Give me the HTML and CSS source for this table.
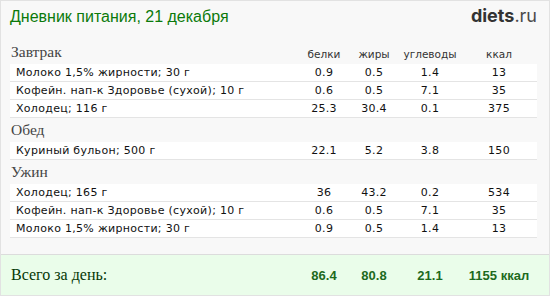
FILE: index.html
```html
<!DOCTYPE html>
<html lang="ru">
<head>
<meta charset="utf-8">
<title>Дневник питания</title>
<link rel="stylesheet" href="styles.css">
</head>
<body>
<div class="page">
  <div class="header">
    <div class="title">Дневник питания, 21 декабря</div>
    <div class="logo"><b>diets</b>.ru</div>
  </div>
  <div class="content">
    <div class="section-head">
      <div class="meal">Завтрак</div>
      <div class="col">белки</div>
      <div class="col">жиры</div>
      <div class="col">углеводы</div>
      <div class="col">ккал</div>
    </div>
    <div class="row"><div class="name">Молоко 1,5% жирности; 30 г</div><div class="col">0.9</div><div class="col">0.5</div><div class="col">1.4</div><div class="col">13</div></div>
    <div class="row"><div class="name">Кофейн. нап-к Здоровье (сухой); 10 г</div><div class="col">0.6</div><div class="col">0.5</div><div class="col">7.1</div><div class="col">35</div></div>
    <div class="row"><div class="name">Холодец; 116 г</div><div class="col">25.3</div><div class="col">30.4</div><div class="col">0.1</div><div class="col">375</div></div>

    <div class="section-head"><div class="meal">Обед</div></div>
    <div class="row"><div class="name">Куриный бульон; 500 г</div><div class="col">22.1</div><div class="col">5.2</div><div class="col">3.8</div><div class="col">150</div></div>

    <div class="section-head"><div class="meal">Ужин</div></div>
    <div class="row"><div class="name">Холодец; 165 г</div><div class="col">36</div><div class="col">43.2</div><div class="col">0.2</div><div class="col">534</div></div>
    <div class="row"><div class="name">Кофейн. нап-к Здоровье (сухой); 10 г</div><div class="col">0.6</div><div class="col">0.5</div><div class="col">7.1</div><div class="col">35</div></div>
    <div class="row"><div class="name">Молоко 1,5% жирности; 30 г</div><div class="col">0.9</div><div class="col">0.5</div><div class="col">1.4</div><div class="col">13</div></div>
  </div>
  <div class="total">
    <div class="total-label">Всего за день:</div>
    <div class="col">86.4</div>
    <div class="col">80.8</div>
    <div class="col">21.1</div>
    <div class="col">1155 ккал</div>
  </div>
</div>
</body>
</html>
```
FILE: styles.css
```css
* { box-sizing: border-box; }
html, body { margin: 0; padding: 0; background: #f8f8f8; }
.page {
  width: 550px;
  height: 296px;
  border: 1px solid #e2e2e2;
  background: #f8f8f8;
  display: flex;
  flex-direction: column;
}
.header {
  height: 39px;
  display: flex;
  justify-content: space-between;
  align-items: flex-start;
  padding: 7px 12px 0 9px;
}
.title {
  font-family: "Liberation Sans", Arial, sans-serif;
  font-size: 16px;
  color: #0b7a0b;
  line-height: 18px;
}
.logo {
  font-family: "Inter", "Open Sans", sans-serif;
  font-size: 18px;
  color: #4a4a4a;
  line-height: 18px;
  margin-top: -1px;
}
.logo b { color: #333; font-weight: 700; }
.content {
  padding: 0 12px 0 9px;
  flex: 1;
}
.section-head, .row, .total {
  display: grid;
  grid-template-columns: 1fr 50px 50px 62px 76px;
  align-items: end;
}
.section-head {
  height: 24px;
  padding-bottom: 4px;
}
.meal {
  font-family: "Liberation Serif", "Times New Roman", serif;
  font-size: 15.5px;
  color: #444;
  line-height: 16px;
  padding-left: 1px;
}
.section-head .col {
  font-family: "DejaVu Sans", Verdana, sans-serif;
  font-size: 10.5px;
  color: #333;
  text-align: center;
  line-height: 12px;
}
.row {
  height: 18px;
  background: #fff;
  border-bottom: 1px solid #e4e4e4;
  align-items: center;
  font-family: "DejaVu Sans", Verdana, sans-serif;
  font-size: 11px;
  letter-spacing: 0.3px;
  color: #111;
}
.row .name { padding-left: 6px; white-space: nowrap; }
.row .col { text-align: center; }
.total {
  height: 41px;
  background: #eafdea;
  border-top: 1px solid #dcdcdc;
  padding: 0 12px 0 9px;
  align-items: center;
}
.total-label {
  font-family: "Liberation Serif", "Times New Roman", serif;
  font-size: 16px;
  color: #053805;
  padding-left: 1px;
}
.total .col {
  font-family: "Liberation Sans", Arial, sans-serif;
  font-weight: 700;
  font-size: 13px;
  color: #1d6a1d;
  text-align: center;
  white-space: nowrap;
}
```
